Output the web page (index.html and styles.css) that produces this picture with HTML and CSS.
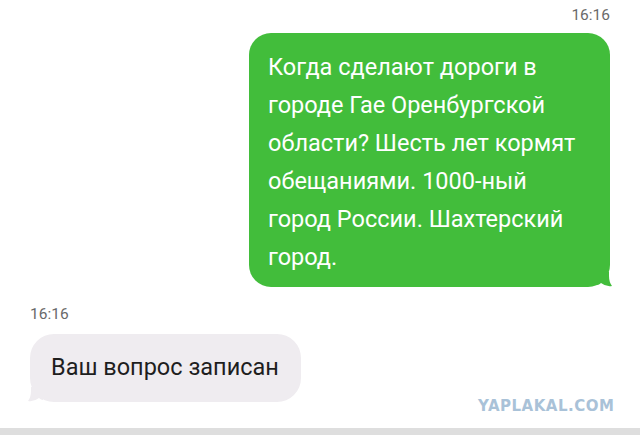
FILE: index.html
```html
<!DOCTYPE html>
<html lang="ru">
<head>
<meta charset="UTF-8">
<title>Сообщения</title>
<link rel="stylesheet" href="styles.css">
</head>
<body>

<main class="chat">
  <div class="time time-out">16:16</div>
  <div class="bubble bubble-out">
    Когда сделают дороги в городе Гае Оренбургской области? Шесть лет кормят обещаниями. 1000-ный город России. Шахтерский город.
    <svg class="tail tail-out" width="16" height="16" viewBox="0 0 16 16"><path d="M0 0 H12 V4 Q12 10 15 14 Q9 15 4 11 Q2 13 0 13 Z" fill="#42bd3b"/></svg>
  </div>
  <div class="time time-in">16:16</div>
  <div class="bubble bubble-in">
    Ваш вопрос записан
    <svg class="tail tail-in" width="16" height="16" viewBox="0 0 16 16"><path d="M16 0 H4 V4 Q4 10 1 14 Q7 15 12 11 Q14 13 16 13 Z" fill="#efecf0"/></svg>
  </div>
  <div class="watermark">YAPLAKAL.COM</div>
</main>
<div class="bottom-bar"></div>

</body>
</html>
```

FILE: styles.css
```css
body { margin: 0; background: #ffffff; font-family: Roboto, "Noto Sans", sans-serif; color: #222; }
.chat { position: relative; height: 428px; padding: 0 30px; box-sizing: border-box; display: flex; flex-direction: column; }
.time { font-size: 15.5px; color: #6a6a6a; }
.time-out { align-self: flex-end; margin-top: 6px; height: 27px; }
.time-in { margin-top: 18px; height: 29px; }
.bubble { position: relative; font-size: 23.5px; box-sizing: border-box; }
.bubble-out { align-self: flex-end; width: 361px; background: #42bd3b; color: #ffffff; border-radius: 22px; padding: 15px 22px 11px 19px; line-height: 38px; }
.bubble-in { align-self: flex-start; width: 271px; height: 68px; background: #efecf0; color: #1e1e1e; border-radius: 24px; padding: 0 21px; line-height: 66px; }
.tail { position: absolute; }
.tail-out { right: -3px; bottom: -1px; }
.tail-in { left: -3px; bottom: -1px; }
.watermark { position: absolute; left: 478px; top: 397px; font-family: "DejaVu Sans", sans-serif; font-weight: bold; font-size: 15px; letter-spacing: 0.5px; color: #a9c2d8; }
.bottom-bar { height: 7px; background: #dedede; }
```
